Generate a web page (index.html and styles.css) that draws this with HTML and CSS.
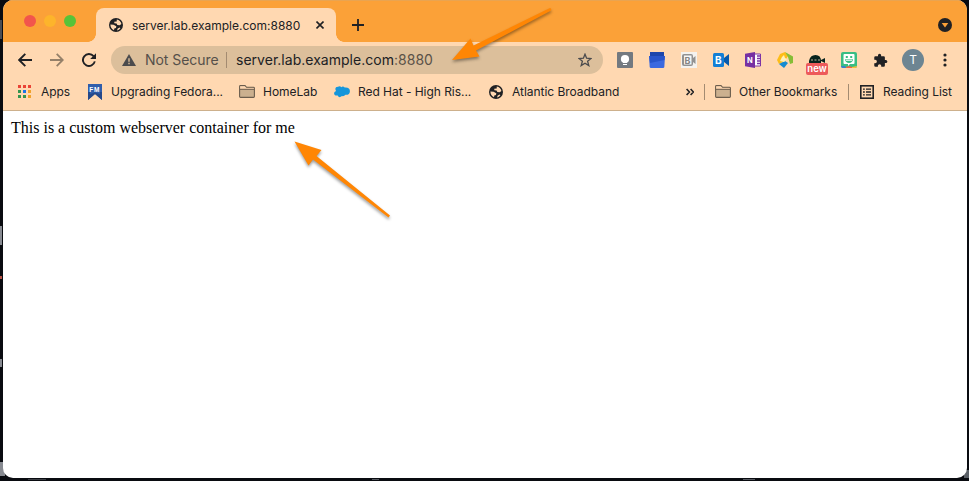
FILE: index.html
```
<!DOCTYPE html>
<html lang="en">
<head>
<meta charset="utf-8">
<title>server.lab.example.com:8880</title>
<link rel="stylesheet" href="styles.css">
</head>
<body>
<svg class="defs" width="0" height="0">
  <symbol id="globe" viewBox="0 0 14 14"><circle cx="7" cy="7" r="7" fill="#202124"/><path d="M7.8 1.5Q11.5 2 12.4 6L10.7 7.3 8.3 6.9 7.6 5.6 5.4 5.2 5.2 3.8 7.7 3.4ZM1.4 6.5L4.6 6.8 7.3 8.3 7 10 5.3 10.5 5 12.3Q1.5 10.7 1.4 6.5ZM8 12.5L8.7 10.5 10.7 9.5 11.4 10.2Q10.1 12.2 8 12.5Z" fill="#ffd8b1"/></symbol>
  <symbol id="folder" viewBox="0 0 16 13"><path d="M.6 1.5Q.6.6 1.5.6H6L7.6 2.3H14.5Q15.4 2.3 15.4 3.2V11.5Q15.4 12.4 14.5 12.4H1.5Q.6 12.4.6 11.5Z" fill="#cbb08f" stroke="#6b5d4d" stroke-width="1.1"/><path d="M1.2 1.2H5.7L7.3 2.9H14.8V4H1.2Z" fill="#ffd8b1"/><path d="M1 4.3H15" stroke="#6b5d4d"/></symbol>
</svg>
<div class="desktop">
  <i class="bit b1"></i><i class="bit b2"></i><i class="bit b3"></i><i class="bit b4"></i><i class="bit b5"></i><i class="bit b6"></i><i class="bit b7"></i><i class="bit b8"></i><i class="bit b9"></i>
  <div class="window">
    <header class="tabs">
      <div class="lights"><i class="red"></i><i class="yellow"></i><i class="green"></i></div>
      <div class="tab">
        <svg class="fav" width="14" height="14"><use href="#globe"/></svg>
        <span class="title">server.lab.example.com:8880</span>
        <svg class="close" width="8" height="8" viewBox="0 0 8 8"><path d="M.5.5L7.5 7.5M7.5.5L.5 7.5" stroke="#202124" stroke-width="1.6"/></svg>
      </div>
      <svg class="plus" width="12" height="12" viewBox="0 0 12 12"><path d="M6 0V12M0 6H12" stroke="#202124" stroke-width="1.8"/></svg>
      <svg class="search" width="14" height="14" viewBox="0 0 14 14"><circle cx="7" cy="7" r="7" fill="#202124"/><path d="M3.7 5H10.3L7 9.5Z" fill="#fba138"/></svg>
    </header>
    <nav class="toolbar">
      <svg class="back" width="14" height="14" viewBox="0 0 14 14"><path d="M14 7H1.5M7.3.8L1.2 7 7.3 13.2" fill="none" stroke="#202124" stroke-width="1.9"/></svg>
      <svg class="fwd" width="14" height="14" viewBox="0 0 14 14"><path d="M0 7H12.5M6.7.8L12.8 7 6.7 13.2" fill="none" stroke="#958069" stroke-width="1.8"/></svg>
      <svg class="reload" width="14" height="14" viewBox="0 0 14 14"><path d="M11.6 3.2A6 6 0 1 0 12.8 8.4" fill="none" stroke="#202124" stroke-width="1.9"/><path d="M14 .2V6H8.2Z" fill="#202124"/></svg>
      <div class="omnibox">
        <svg class="warn" width="14" height="12" viewBox="0 0 14 12"><path d="M7 0L14 12H0Z" fill="#4b4b4d"/><path d="M7 4.2V7.8M7 8.8V10.2" stroke="#dcbf9b" stroke-width="1.4"/></svg>
        <span class="insecure">Not Secure</span><i class="bar"></i>
        <span class="url">server.lab.example.com<span>:8880</span></span>
        <svg class="star" width="14" height="14" viewBox="0 0 14 14"><path d="M7 1.2L8.6 5.2 13 5.5 9.6 8.2 10.8 12.6 7 10.2 3.2 12.6 4.4 8.2 1 5.5 5.4 5.2Z" fill="none" stroke="#4b4b4d" stroke-width="1.3"/></svg>
      </div>
      <div class="extensions">
        <svg width="16" height="16" viewBox="0 0 16 16"><rect width="16" height="16" rx="1" fill="#737980"/><circle cx="8" cy="7" r="4.1" fill="#fff"/><path d="M6 10H10V11H6ZM6 12H10V13H6Z" fill="#fff"/></svg>
        <svg width="16" height="16" viewBox="0 0 16 16"><path d="M1 0H15V9H1Z" fill="#1d46ac"/><path d="M0 4H16L15.3 15Q15.2 16 14 16H2Q.8 16 .7 15Z" fill="#3b69e0"/><path d="M.2 4H15.8L15.5 8 1 11Z" fill="#2855ca"/></svg>
        <svg width="16" height="16" viewBox="0 0 16 16"><rect width="16" height="16" fill="#f4f2ef"/><rect x="1" y="2" width="11" height="12" rx="2" fill="#929292"/><rect x="3" y="3.5" width="7.5" height="9" fill="#f8f8f8"/><path d="M12 6L14.5 4V12L12 10Z" fill="#929292"/><text x="3.4" y="11.5" class="blet gray">B</text></svg>
        <svg width="16" height="16" viewBox="0 0 16 16"><rect y="1" width="11" height="14" rx="1.5" fill="#137fd5"/><path d="M11 6L16 2V14L11 10Z" fill="#075aad"/><text x="2" y="11.6" class="blet">B</text></svg>
        <svg width="16" height="16" viewBox="0 0 16 16"><path d="M9 2H15.5V14H9Z" fill="#fff" stroke="#7c34a5"/><path d="M12 4H15M12 6.5H15M12 9H15M12 11.5H15" stroke="#7c34a5" stroke-width="1.4"/><path d="M0 1.8L10 0V16L0 14.2Z" fill="#7730a2"/><text x="2" y="10.8" class="nlet">N</text></svg>
        <svg width="18" height="16" viewBox="0 0 18 16"><path d="M3 2L8 0 11 4 8 9 2 12 0 8Z" fill="#fdbd18"/><path d="M8 0L16 4.5V11L13 12 11 5Z" fill="#86bd36"/><path d="M2 12L8 9 11 11 7 16Z" fill="#178bd0"/><path d="M3 9L5 5 7 3 8 6 10 7 7 10Z" fill="#fff0b9"/></svg>
        <div class="new-ext"><svg width="18" height="10" viewBox="0 0 18 10"><path d="M1 10V7Q2 1 7.5 1T13 7V10Z" fill="#08231c"/><path d="M13 6L17 4V9L13 7Z" fill="#08231c"/><path d="M3 6H5M6.5 6H8.5M10 6H12" stroke="#c0b49a"/></svg><b>new</b></div>
        <svg width="16" height="16" viewBox="0 0 16 16"><rect width="16" height="16" rx="2" fill="#39bd83"/><path d="M3.5 2H12.5Q13.5 2 13.5 3V11Q13.5 12 12.5 12H9L7 14V12H3.5Q2.5 12 2.5 11V3Q2.5 2 3.5 2Z" fill="#fff"/><path d="M4.8 4H6.8V6H4.8ZM9.2 4H11.2V6H9.2ZM4 7.2H12Q11.5 11 8 11T4 7.2Z" fill="#39bd83"/><path d="M5 7.8H11V8.7H5Z" fill="#fff"/><path d="M0 14H4L5 16H2Q0 16 0 14Z" fill="#3980cf"/><path d="M5 15L8 14 11 15V16H5Z" fill="#ee6544"/><path d="M11 15L16 14Q16 16 14 16H11Z" fill="#f8bd35"/></svg>
        <svg width="15" height="15" viewBox="0 0 24 24"><path d="M20.5 11H19V7a2 2 0 0 0-2-2h-4V3.5a2.5 2.5 0 0 0-5 0V5H4a2 2 0 0 0-2 2v3.8h1.5a2.7 2.7 0 0 1 0 5.4H2V20a2 2 0 0 0 2 2h3.8v-1.5a2.7 2.7 0 0 1 5.4 0V22H17a2 2 0 0 0 2-2v-4h1.5a2.5 2.5 0 0 0 0-5Z" fill="#202124"/></svg>
        <span class="avatar">T</span>
        <svg width="4" height="14" viewBox="0 0 4 14"><g fill="#202124"><circle cx="2" cy="2" r="1.6"/><circle cx="2" cy="7" r="1.6"/><circle cx="2" cy="12" r="1.6"/></g></svg>
      </div>
    </nav>
    <nav class="bookmarks">
      <div class="bm apps"><div class="dots"><i></i><i></i><i></i><i></i><i></i><i></i><i></i><i></i><i></i></div><span>Apps</span></div>
      <div class="bm fedora"><svg width="14" height="16" viewBox="0 0 14 16"><path d="M0 0H14V16L7 10 0 16Z" fill="#315eab"/><path d="M0 8H14V16L7 10 0 16Z" fill="#25488a"/><path d="M2 8H12V10L7 8.6 2 10Z" fill="#315eab"/><text x="1.3" y="7.6" class="fm">FM</text></svg><span>Upgrading Fedora...</span></div>
      <div class="bm home"><svg width="16" height="13"><use href="#folder"/></svg><span>HomeLab</span></div>
      <div class="bm redhat"><svg width="16" height="12" viewBox="0 0 16 12"><path d="M2 5Q0 1 4 .8Q6-.3 7.3 1.2Q9-.1 10.7 1.5Q15.8 1 15.9 5Q16 9 11.5 8.8Q9.8 10.6 8 10Q5 12.5 3.7 9.5Q0 10 .1 7Q.1 5.8 2 5Z" fill="#1596db"/></svg><span>Red Hat - High Ris...</span></div>
      <div class="bm atlantic"><svg width="14" height="14"><use href="#globe"/></svg><span>Atlantic Broadband</span></div>
      <svg class="more" width="8" height="8" viewBox="0 0 8 8"><path d="M.6 1L3.4 4 .6 7M4.6 1L7.4 4 4.6 7" fill="none" stroke="#202124" stroke-width="1.6"/></svg>
      <i class="bar first"></i>
      <div class="bm other"><svg width="16" height="13"><use href="#folder"/></svg><span>Other Bookmarks</span></div>
      <i class="bar second"></i>
      <div class="bm reading"><svg width="14" height="14" viewBox="0 0 14 14"><rect x=".8" y=".8" width="12.4" height="12.4" fill="none" stroke="#202124" stroke-width="1.6"/><path d="M3 4.2H4.8M3 7H4.8M3 9.8H4.8M6 4.2H11M6 7H11M6 9.8H11" stroke="#202124" stroke-width="1.3"/></svg><span>Reading List</span></div>
    </nav>
    <main>This is a custom webserver container for me</main>
  </div>
  <svg class="arrows" width="969" height="481" viewBox="0 0 969 481" fill="#ff8604"><path d="M452 60L470.5 38.5 473.5 45.5 550 8Q552 8.5 551 10.5L476 50.5 479.5 56.5Z"/><path d="M294.5 141.5L321.5 150 316.5 156 390 215.5 388.5 217.5 313 159.5 308.5 165.5Z"/></svg>
</div>
</body>
</html>
```
FILE: styles.css
```
* { box-sizing: border-box; }
body { margin: 0; overflow: hidden; font-family: Inter, "Liberation Sans", sans-serif; color: #202124; }
svg { display: block; flex: none; }
.defs { position: absolute; }
.desktop { position: relative; height: 481px; padding: 0 2px 3px 3px; background: #090b10; }
.window { position: relative; height: 478px; overflow: hidden; background: #fff; border-radius: 10px; }
.tabs { display: flex; height: 42px; background: #fba138; border-top: 1px solid #e9a451; }
.lights { display: flex; gap: 8px; padding: 14px 0 0 21px; width: 93px; }
.lights i { width: 12px; height: 12px; border-radius: 50%; }
.red { background: #f2554c; }
.yellow { background: #fdb42b; }
.green { background: #58c338; }
.tab { position: relative; display: flex; align-items: center; width: 240px; height: 34px; margin-top: 7px; padding-left: 13px; background: #ffd8b1; border-radius: 8px 8px 0 0; }
.tab::before, .tab::after { content: ""; position: absolute; bottom: 0; width: 8px; height: 8px; }
.tab::before { left: -8px; background: radial-gradient(circle at 0 0, #fba138 7.5px, #ffd8b1 8px); }
.tab::after { right: -8px; background: radial-gradient(circle at 100% 0, #fba138 7.5px, #ffd8b1 8px); }
.title { margin-left: 9px; width: 168px; font-size: 12px; white-space: nowrap; }
.close { margin-left: 16px; }
.plus { margin: 18px 0 0 16px; }
.search { margin: 17px 15px 0 auto; }
.toolbar { display: flex; align-items: center; height: 36px; background: #ffd8b1; }
.back { margin-left: 15px; }
.fwd, .reload { margin-left: 18px; }
.omnibox { display: flex; align-items: center; width: 492px; height: 28px; margin-left: 15px; padding-left: 11px; border-radius: 14px; background: #dcbf9b; font-size: 14px; white-space: nowrap; }
.omnibox > span { position: relative; top: -1px; }
.insecure { width: 73px; margin-left: 9px; color: #55504a; letter-spacing: -.05px; }
.omnibox .bar { margin: 0 9px 0 8px; height: 16px; }
.url { letter-spacing: .02px; }
.url span { color: #5a5248; }
.star { margin: 0 11px 0 auto; }
.extensions { display: flex; align-items: center; gap: 16px; margin-left: 14px; }
.new-ext { width: 22px; height: 20px; display: flex; flex-direction: column; align-items: center; margin: 7px -3px 0 -5px; }
.new-ext b { width: 22px; height: 12px; margin-top: -1px; border-radius: 2px; background: #ed5a5a; color: #fff; font-size: 9.5px; font-weight: 600; line-height: 12px; text-align: center; }
.avatar { width: 22px; height: 22px; margin: 0 3px 0 -2px; border-radius: 50%; background: #6d8592; color: #fff; font-size: 12px; line-height: 22px; text-align: center; }
.blet { font: bold 10px Inter; fill: #fff; }
.gray { fill: #858585; font-size: 9px; }
.nlet { font: bold 7.5px Inter; fill: #fff; }
.fm { font: bold 6.5px "Liberation Sans"; fill: #fff; letter-spacing: .8px; }
.bookmarks { display: flex; align-items: center; height: 33px; padding: 0 0 5px 15px; background: #ffd8b1; border-bottom: 1px solid #cdb08c; font-size: 12px; letter-spacing: -.04px; white-space: nowrap; }
.bm { display: flex; align-items: center; gap: 9px; }
.apps { width: 70px; gap: 10px; }
.fedora { width: 151px; }
.home { width: 95px; gap: 8px; }
.redhat { width: 155px; gap: 8px; }
.atlantic { width: 197px; }
.dots { display: grid; grid-template-columns: repeat(3, 3px); gap: 2px; }
.dots i { height: 3px; background: #ea4335; }
.dots i:nth-child(4), .dots i:nth-child(7), .dots i:nth-child(8) { background: #34954f; }
.dots i:nth-child(5) { background: #1a73e8; }
.dots i:nth-child(6), .dots i:nth-child(9) { background: #f0a12b; }
.bar { width: 1px; height: 16px; background: #a38b71; flex: none; }
.first { margin: 0 10px; }
.other { width: 122px; gap: 8px; }
.second { margin: 0 11px; }
main { padding: 8px; color: #000; font: 16px/18px "Liberation Serif", serif; }
.arrows { position: absolute; inset: 0; filter: drop-shadow(0 2px 1.5px #0006); }
.bit { position: absolute; background: #878a91; }
.b1 { left: 0; top: 20px; width: 2px; height: 19px; background: #4a4c52; }
.b2 { left: 0; top: 226px; width: 2px; height: 19px; }
.b3 { left: 0; top: 276px; width: 2px; height: 3px; background: #b65245; }
.b4 { left: 0; top: 359px; width: 2px; height: 8px; }
.b5 { left: 0; top: 462px; width: 5px; height: 14px; }
.b6 { left: 28px; top: 479px; width: 18px; height: 1px; background: #3c3e44; }
.b7 { left: 372px; top: 479px; width: 7px; height: 1px; background: #55585f; }
.b8 { left: 743px; top: 479px; width: 12px; height: 1px; background: #55585f; }
.b9 { left: 964px; top: 470px; width: 5px; height: 8px; background: #5b6067; }
```
